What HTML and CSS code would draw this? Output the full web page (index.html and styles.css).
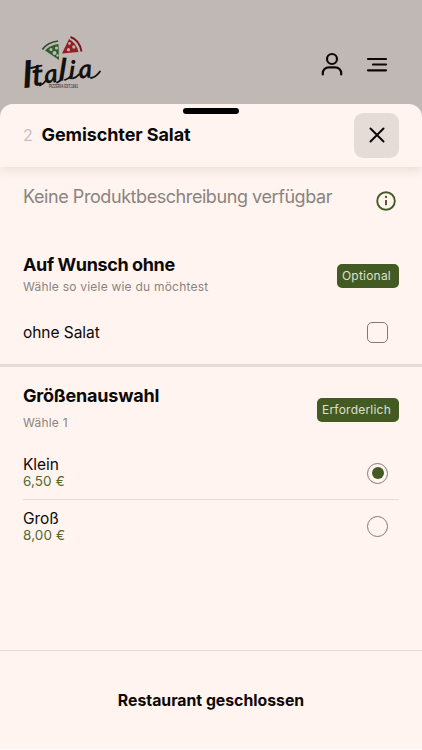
FILE: index.html
```html
<!DOCTYPE html>
<html lang="de">
<head>
<meta charset="utf-8">
<title>Italia – Gemischter Salat</title>
<link rel="stylesheet" href="styles.css">
</head>
<body>
<header class="topbar">
  <svg class="logo" width="80" height="58" viewBox="0 0 80 58">
    <g transform="translate(-1 -2.500)">
      <path d="M20.500 20 Q25 13 36 11.500" fill="none" stroke="#294c26" stroke-width="1.700"/>
      <path d="M23 21 Q28 15.500 36.500 14.500 L37 30.500 Z" fill="#315c2e"/>
      <circle cx="29" cy="20" r="1.500" fill="#b9c0ad"/>
      <circle cx="34.500" cy="18.500" r="1.600" fill="#b9c0ad"/>
      <circle cx="32.500" cy="23.500" r="2" fill="#b9c0ad"/>
      <circle cx="35.500" cy="26" r="1.200" fill="#b9c0ad"/>
    </g>
    <g transform="translate(0 -2)">
      <path d="M47.500 7 Q56.500 10 58.500 21.500" fill="none" stroke="#7d171b" stroke-width="1.900"/>
      <path d="M46 9 Q53.500 13 55.500 22 L39 23.500 Z" fill="#941e22"/>
      <circle cx="46.500" cy="13.500" r="1.400" fill="#c7a9a3"/>
      <circle cx="50.800" cy="17" r="1.700" fill="#c7a9a3"/>
      <circle cx="45.500" cy="19.800" r="1.700" fill="#c7a9a3"/>
    </g>
    <text class="logo-name" x="0 9.500 22 35.500 45.500 56" y="56 54 51.500 48.500 47 46.500" rotate="-4 -4 -6 2 2 -4"><tspan class="logo-cap">I</tspan><tspan class="logo-tall">t</tspan>a<tspan class="logo-tall">l</tspan>ia</text>
    <path class="swash" d="M8 36l10.500-2.300M17 53.500q3-1 6-5M34 50.500q3-1 5-4M42 47.800q3-.5 5-3M50 46.300q3-.5 6-4M68 46q5-1 9-6.500"/>
    <text class="logo-sub" x="26" y="55.800" textLength="29" lengthAdjust="spacingAndGlyphs">PIZZERIA EST.1991</text>
  </svg>
  <nav class="actions">
    <svg width="24" height="26" viewBox="0 0 24 26"><circle cx="12" cy="7" r="5"/><path d="M2.800 22.500v-1.200a6 6 0 0 1 6-6h6.400a6 6 0 0 1 6 6v1.200"/></svg>
    <svg width="24" height="26" viewBox="0 0 24 26"><path d="M3 7h18M8 12.500h13M3 18.300h18"/></svg>
  </nav>
</header>
<main class="sheet">
  <div class="sheet-head">
    <div class="handle"></div>
    <span class="number">2</span>
    <h1>Gemischter Salat</h1>
    <button class="close" aria-label="Schließen"><svg width="16" height="16" viewBox="0 0 16 16"><path d="M1.500 1.500l13 13M14.500 1.500l-13 13"/></svg></button>
  </div>
  <section class="description">
    <p>Keine Produktbeschreibung verfügbar</p>
    <svg width="20" height="20" viewBox="0 0 20 20"><circle cx="10" cy="10" r="8.800"/><path d="M10 9v5.200"/><circle class="dot" cx="10" cy="6" r="1.150"/></svg>
  </section>
  <section class="group extras">
    <div class="group-head">
      <div><h2>Auf Wunsch ohne</h2><p class="hint">Wähle so viele wie du möchtest</p></div>
      <span class="badge optional">Optional</span>
    </div>
    <label class="option"><span class="name">ohne Salat</span><span class="check"></span></label>
  </section>
  <section class="group sizes">
    <div class="group-head">
      <div><h2>Größenauswahl</h2><p class="hint">Wähle 1</p></div>
      <span class="badge required">Erforderlich</span>
    </div>
    <label class="option size"><span><span class="name">Klein</span><span class="price">6,50 €</span></span><span class="radio selected"></span></label>
    <label class="option size"><span><span class="name">Groß</span><span class="price">8,00 €</span></span><span class="radio"></span></label>
  </section>
  <footer>Restaurant geschlossen</footer>
</main>
</body>
</html>
```
FILE: styles.css
```css
* { box-sizing: border-box; }
body { margin: 0; height: 750px; overflow: hidden; display: flex; flex-direction: column; background: #c0b8b5; font-family: Inter, "Liberation Sans", sans-serif; color: #0b0908; }
h1, h2, p { margin: 0; }
.topbar { height: 103.5px; flex: none; display: flex; justify-content: space-between; padding: 32px 33px 0 23px; }
.logo { overflow: visible; }
.logo-name { font: italic 700 26px Lato, sans-serif; fill: #15100e; }
.logo-cap { font-size: 38px; }
.logo-tall { font-size: 31px; }
.swash { fill: none; stroke: #15100e; stroke-width: 1.8px; stroke-linecap: round; }
.logo-sub { font: 700 5px "Liberation Sans", sans-serif; fill: #4c4543; }
.actions { display: flex; gap: 21px; padding-top: 20px; }
.actions svg { fill: none; stroke: #0b0908; stroke-width: 2.2px; stroke-linecap: round; }
.sheet { height: 646.5px; flex: none; display: flex; flex-direction: column; background: #fff4ef; border-radius: 13px 13px 0 0; overflow: hidden; border-bottom: 1px solid #fffcfa; }
.sheet-head { position: relative; height: 63.5px; flex: none; display: flex; align-items: center; padding: 0 23px; box-shadow: 0 1px 12px rgba(70, 45, 35, .15); }
.handle { position: absolute; left: 183px; top: 4.5px; width: 56px; height: 6px; border-radius: 3px; background: #000; }
.number { width: 18.5px; font-size: 16px; color: #c8bfbb; }
h1, h2 { font-size: 18px; line-height: 24px; font-weight: 700; white-space: nowrap; letter-spacing: -.2px; }
h1 { letter-spacing: -.08px; }
.extras h2 { letter-spacing: -.38px; }
.extras h2, .sizes h2 { padding-top: 1px; height: 24px; line-height: 24px; }
.close { margin: 0 0 0 auto; width: 45px; height: 45px; border: 0; border-radius: 9px; padding: 0; background: #e5dcd7; display: grid; place-items: center; }
.close svg { fill: none; stroke: #0b0908; stroke-width: 2px; stroke-linecap: round; }
.description { height: 80px; flex: none; display: flex; justify-content: space-between; padding: 18px 26px 0 23px; }
.description p { font-size: 18px; line-height: 24px; letter-spacing: -.43px; color: #8b8380; white-space: nowrap; }
.description svg { margin-top: 6px; fill: none; stroke: #435b22; stroke-width: 1.9px; }
.description .dot { fill: #435b22; stroke: none; }
.group { flex: none; padding: 0 23px; }
.extras { height: 120px; padding-top: 5px; border-bottom: 3px solid #e5dcd7; }
.group-head { display: flex; justify-content: space-between; }
.hint { font-size: 12px; line-height: 16px; letter-spacing: .22px; color: #8b8380; }
.extras .group-head { height: 54px; }
.extras .hint { margin-top: 3px; }
.badge { height: 24px; padding: 0 8px 0 5px; border-radius: 5px; background: #435b22; color: #dfe0cf; font-size: 12px; line-height: 24px; letter-spacing: .22px; }
.optional { margin-top: 12px; }
.required { margin-top: 15px; }
.option { display: flex; justify-content: space-between; align-items: center; padding-right: 11px; }
.extras .option { height: 53px; }
.name { display: block; font-size: 15.5px; line-height: 18px; letter-spacing: -.05px; }
.price { display: block; font-size: 13.5px; line-height: 17px; letter-spacing: .1px; color: #53682f; }
.size .price { margin-top: -1px; }
.check, .radio { width: 21px; height: 21px; border: 1px solid #837874; border-radius: 5px; }
.radio { border-radius: 50%; display: grid; place-items: center; }
.selected::after { content: ""; width: 12px; height: 12px; border-radius: 50%; background: #435b22; }
.sizes { padding-top: 16px; }
.sizes .group-head { height: 64px; }
.sizes .hint { margin-top: 8px; }
.size { height: 53px; border-bottom: 1px solid #e5dcd7; }
.size:last-child { border: 0; }
footer { height: 99px; flex: none; margin-top: auto; border-top: 1px solid #e5dcd7; display: grid; place-items: center; font-size: 15.8px; font-weight: 650; }
```
